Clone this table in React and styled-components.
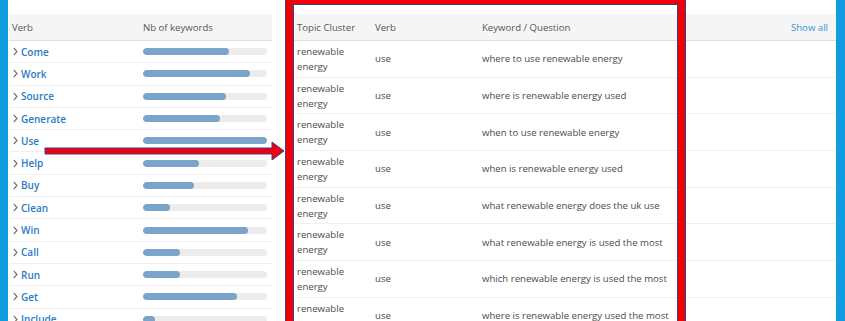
import React from "react";
import styled, { createGlobalStyle } from "styled-components";

const GlobalStyle = createGlobalStyle`
  html, body {
    margin: 0;
    padding: 0;
    background: #ffffff;
    height: 321px;
    overflow: hidden;
  }
  body {
    font-family: "Open Sans", "Noto Sans", sans-serif;
    font-size: 9.6px;
    color: #4c4c4c;
  }
`;

const Page = styled.div`
  position: relative;
  display: flex;
  height: 321px;
  overflow: hidden;
`;

const SideBar = styled.div`
  flex: 0 0 ${(props) => props.w}px;
  background: #109cde;
`;

const Content = styled.div`
  flex: 1;
  display: flex;
  padding: 14px 0 0 1px;
`;

const LeftPanel = styled.div`
  flex: 0 0 263px;
`;

const RightPanel = styled.div`
  flex: 1;
  margin-left: 16px;
`;

const LeftRow = styled.div`
  display: grid;
  grid-template-columns: 131px 1fr;
  align-items: center;
  height: ${(props) => (props.head ? "27px" : "22.3px")};
  background: ${(props) => (props.head ? "#f5f5f5" : "transparent")};
  border-bottom: 1px solid ${(props) => (props.head ? "#e0e0e0" : "#eef0f2")};
  box-sizing: border-box;
  padding: 0 5px 0 3px;
`;

const HeadText = styled.span`
  color: #555;
  white-space: nowrap;
`;

const VerbCell = styled.div`
  display: flex;
  align-items: center;
  gap: 3px;
  padding-left: 1px;
`;

const VerbLink = styled.span`
  color: #2a7bc0;
  font-weight: 600;
  font-size: 10px;
`;

const Track = styled.div`
  height: 7px;
  border-radius: 4px;
  background: #ececec;
  overflow: hidden;
`;

const Fill = styled.div`
  height: 100%;
  border-radius: 4px;
  background: #7ba4ca;
`;

const RightRow = styled.div`
  display: grid;
  grid-template-columns: 78px 107px 1fr auto;
  align-items: center;
  height: ${(props) => (props.head ? "27px" : "36.7px")};
  background: ${(props) => (props.head ? "#f5f5f5" : "transparent")};
  border-bottom: 1px solid ${(props) => (props.head ? "#e0e0e0" : "#eef0f2")};
  box-sizing: border-box;
  padding: 0 8px 0 0;
`;

const Cell = styled.div`
  padding-left: 9px;
  line-height: 15px;
  color: ${(props) => (props.head ? "#555" : "#4c4c4c")};
`;

const ShowAll = styled.span`
  color: #3592d6;
`;

// red annotation frame drawn over the result table
const Highlight = styled.div`
  position: absolute;
  left: 286px;
  top: -3px;
  width: 385px;
  height: 340px;
  border: 7px solid #f00008;
  box-shadow: 0 0 0 1px #3b3f86, inset 0 0 0 1px #3b3f86;
  pointer-events: none;
`;

const ArrowSvg = styled.svg`
  position: absolute;
  left: 44px;
  top: 140px;
  pointer-events: none;
`;

const Chevron = () => (
  <svg width="5" height="9" viewBox="0 0 5 9">
    <polyline points="0.8,1 4,4.5 0.8,8" fill="none" stroke="#777" strokeWidth="1.2" />
  </svg>
);

const verbs = [
  ["Come", 0.69],
  ["Work", 0.86],
  ["Source", 0.67],
  ["Generate", 0.62],
  ["Use", 1],
  ["Help", 0.45],
  ["Buy", 0.41],
  ["Clean", 0.22],
  ["Win", 0.85],
  ["Call", 0.3],
  ["Run", 0.3],
  ["Get", 0.76],
  ["Include", 0.1],
];

const keywords = [
  "where to use renewable energy",
  "where is renewable energy used",
  "when to use renewable energy",
  "when is renewable energy used",
  "what renewable energy does the uk use",
  "what renewable energy is used the most",
  "which renewable energy is used the most",
  "where is renewable energy used the most",
];

export default function App() {
  return (
    <Page>
      <GlobalStyle />
      <SideBar w={8} />
      <Content>
        <LeftPanel>
          <LeftRow head>
            <HeadText>Verb</HeadText>
            <HeadText>Nb of keywords</HeadText>
          </LeftRow>
          {verbs.map(([name, ratio]) => (
            <LeftRow key={name}>
              <VerbCell>
                <Chevron />
                <VerbLink>{name}</VerbLink>
              </VerbCell>
              <Track>
                <Fill style={{ width: `${ratio * 100}%` }} />
              </Track>
            </LeftRow>
          ))}
        </LeftPanel>
        <RightPanel>
          <RightRow head>
            <Cell head>Topic Cluster</Cell>
            <Cell head>Verb</Cell>
            <Cell head>Keyword / Question</Cell>
            <ShowAll>Show all</ShowAll>
          </RightRow>
          {keywords.map((kw) => (
            <RightRow key={kw}>
              <Cell>
                renewable
                <br />
                energy
              </Cell>
              <Cell>use</Cell>
              <Cell>{kw}</Cell>
              <span />
            </RightRow>
          ))}
        </RightPanel>
      </Content>
      <SideBar w={9} />
      <Highlight />
      <ArrowSvg width="242" height="22" viewBox="0 0 242 22">
        <path
          d="M1 8 H228 V2 L240 11 L228 20 V14 H1 Z"
          fill="#ee0010"
          stroke="#3b3f86"
          strokeWidth="1"
        />
      </ArrowSvg>
    </Page>
  );
}
